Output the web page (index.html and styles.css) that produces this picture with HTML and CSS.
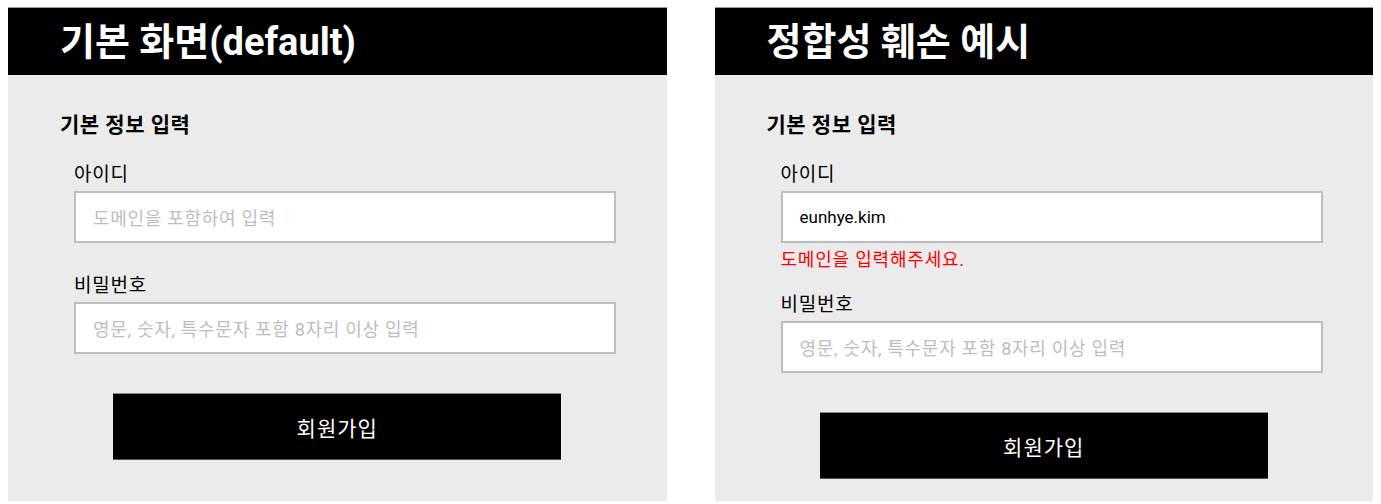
FILE: index.html
```html
<!DOCTYPE html>
<html lang="ko">
<head>
<meta charset="utf-8">
<title>회원가입 예시</title>
<link rel="stylesheet" href="styles.css">
</head>
<body>
<div class="board">
  <section class="panel">
    <header class="panel-head"><h1 class="panel-title">기본 화면(default)</h1></header>
    <div class="panel-body">
      <h2 class="section-title">기본 정보 입력</h2>
      <div class="field">
        <label class="field-label">아이디</label>
        <div class="input"><span class="placeholder">도메인을 포함하여 입력</span></div>
      </div>
      <div class="field">
        <label class="field-label">비밀번호</label>
        <div class="input"><span class="placeholder">영문, 숫자, 특수문자 포함 8자리 이상 입력</span></div>
      </div>
      <div class="actions"><button class="submit">회원가입</button></div>
    </div>
  </section>
  <section class="panel">
    <header class="panel-head"><h1 class="panel-title">정합성 훼손 예시</h1></header>
    <div class="panel-body">
      <h2 class="section-title">기본 정보 입력</h2>
      <div class="field">
        <label class="field-label">아이디</label>
        <div class="input"><span class="value">eunhye.kim</span></div>
        <p class="error">도메인을 입력해주세요.</p>
      </div>
      <div class="field">
        <label class="field-label">비밀번호</label>
        <div class="input"><span class="placeholder">영문, 숫자, 특수문자 포함 8자리 이상 입력</span></div>
      </div>
      <div class="actions"><button class="submit">회원가입</button></div>
    </div>
  </section>
</div>
</body>
</html>
```

FILE: styles.css
```css
* { box-sizing: border-box; }
html, body { margin: 0; background: #fff; }
body {
  padding: 7px 8px 0;
  font-family: Roboto, "Noto Sans CJK KR", sans-serif;
  color: #000;
}
.board {
  display: flex;
  gap: 48px;
}
.panel {
  width: 659px;
  height: 494px;
  background: #ebebeb;
  display: flex;
  flex-direction: column;
}
.panel-head {
  height: 68px;
  background: #000;
  border-top: 1px solid #9a9a9a;
  display: flex;
  align-items: center;
  padding-left: 52px;
}
.panel-title {
  margin: 0;
  color: #fff;
  font-size: 38px;
  font-weight: 700;
  line-height: 44px;
  letter-spacing: 0;
}
.panel-body {
  padding: 38px 0 0 66px;
  display: flex;
  flex-direction: column;
}
.section-title {
  margin: 0 0 28px -14px;
  font-size: 21px;
  font-weight: 700;
  line-height: 24px;
  letter-spacing: 0.5px;
}
.field { display: flex; flex-direction: column; }
.field + .field { margin-top: 33px; }
.field-label {
  font-size: 19px;
  line-height: 20px;
  margin-bottom: 6px;
  letter-spacing: 0.8px;
}
.input {
  width: 542px;
  height: 52px;
  background: #fff;
  border: 2px solid #bdbdbd;
  display: flex;
  align-items: center;
  padding-left: 17px;
  font-size: 17px;
}
.placeholder {
  color: #bdbdbd;
  font-size: 18px;
  letter-spacing: 0.7px;
}
.value { color: #000; }
.error {
  margin: 7px 0 -8px;
  color: #ff0000;
  font-size: 18px;
  line-height: 20px;
  letter-spacing: 0.8px;
}
.actions {
  margin: 39px 0 0 -66px;
  display: flex;
  justify-content: center;
}
.submit {
  width: 448px;
  height: 67px;
  background: #000;
  border: 0;
  border-top: 1px solid #8a8a8a;
  border-bottom: 1px solid #555;
  color: #fff;
  font-family: Roboto, "Noto Sans CJK KR", sans-serif;
  font-size: 21px;
  letter-spacing: 1px;
  padding: 0;
}
```
